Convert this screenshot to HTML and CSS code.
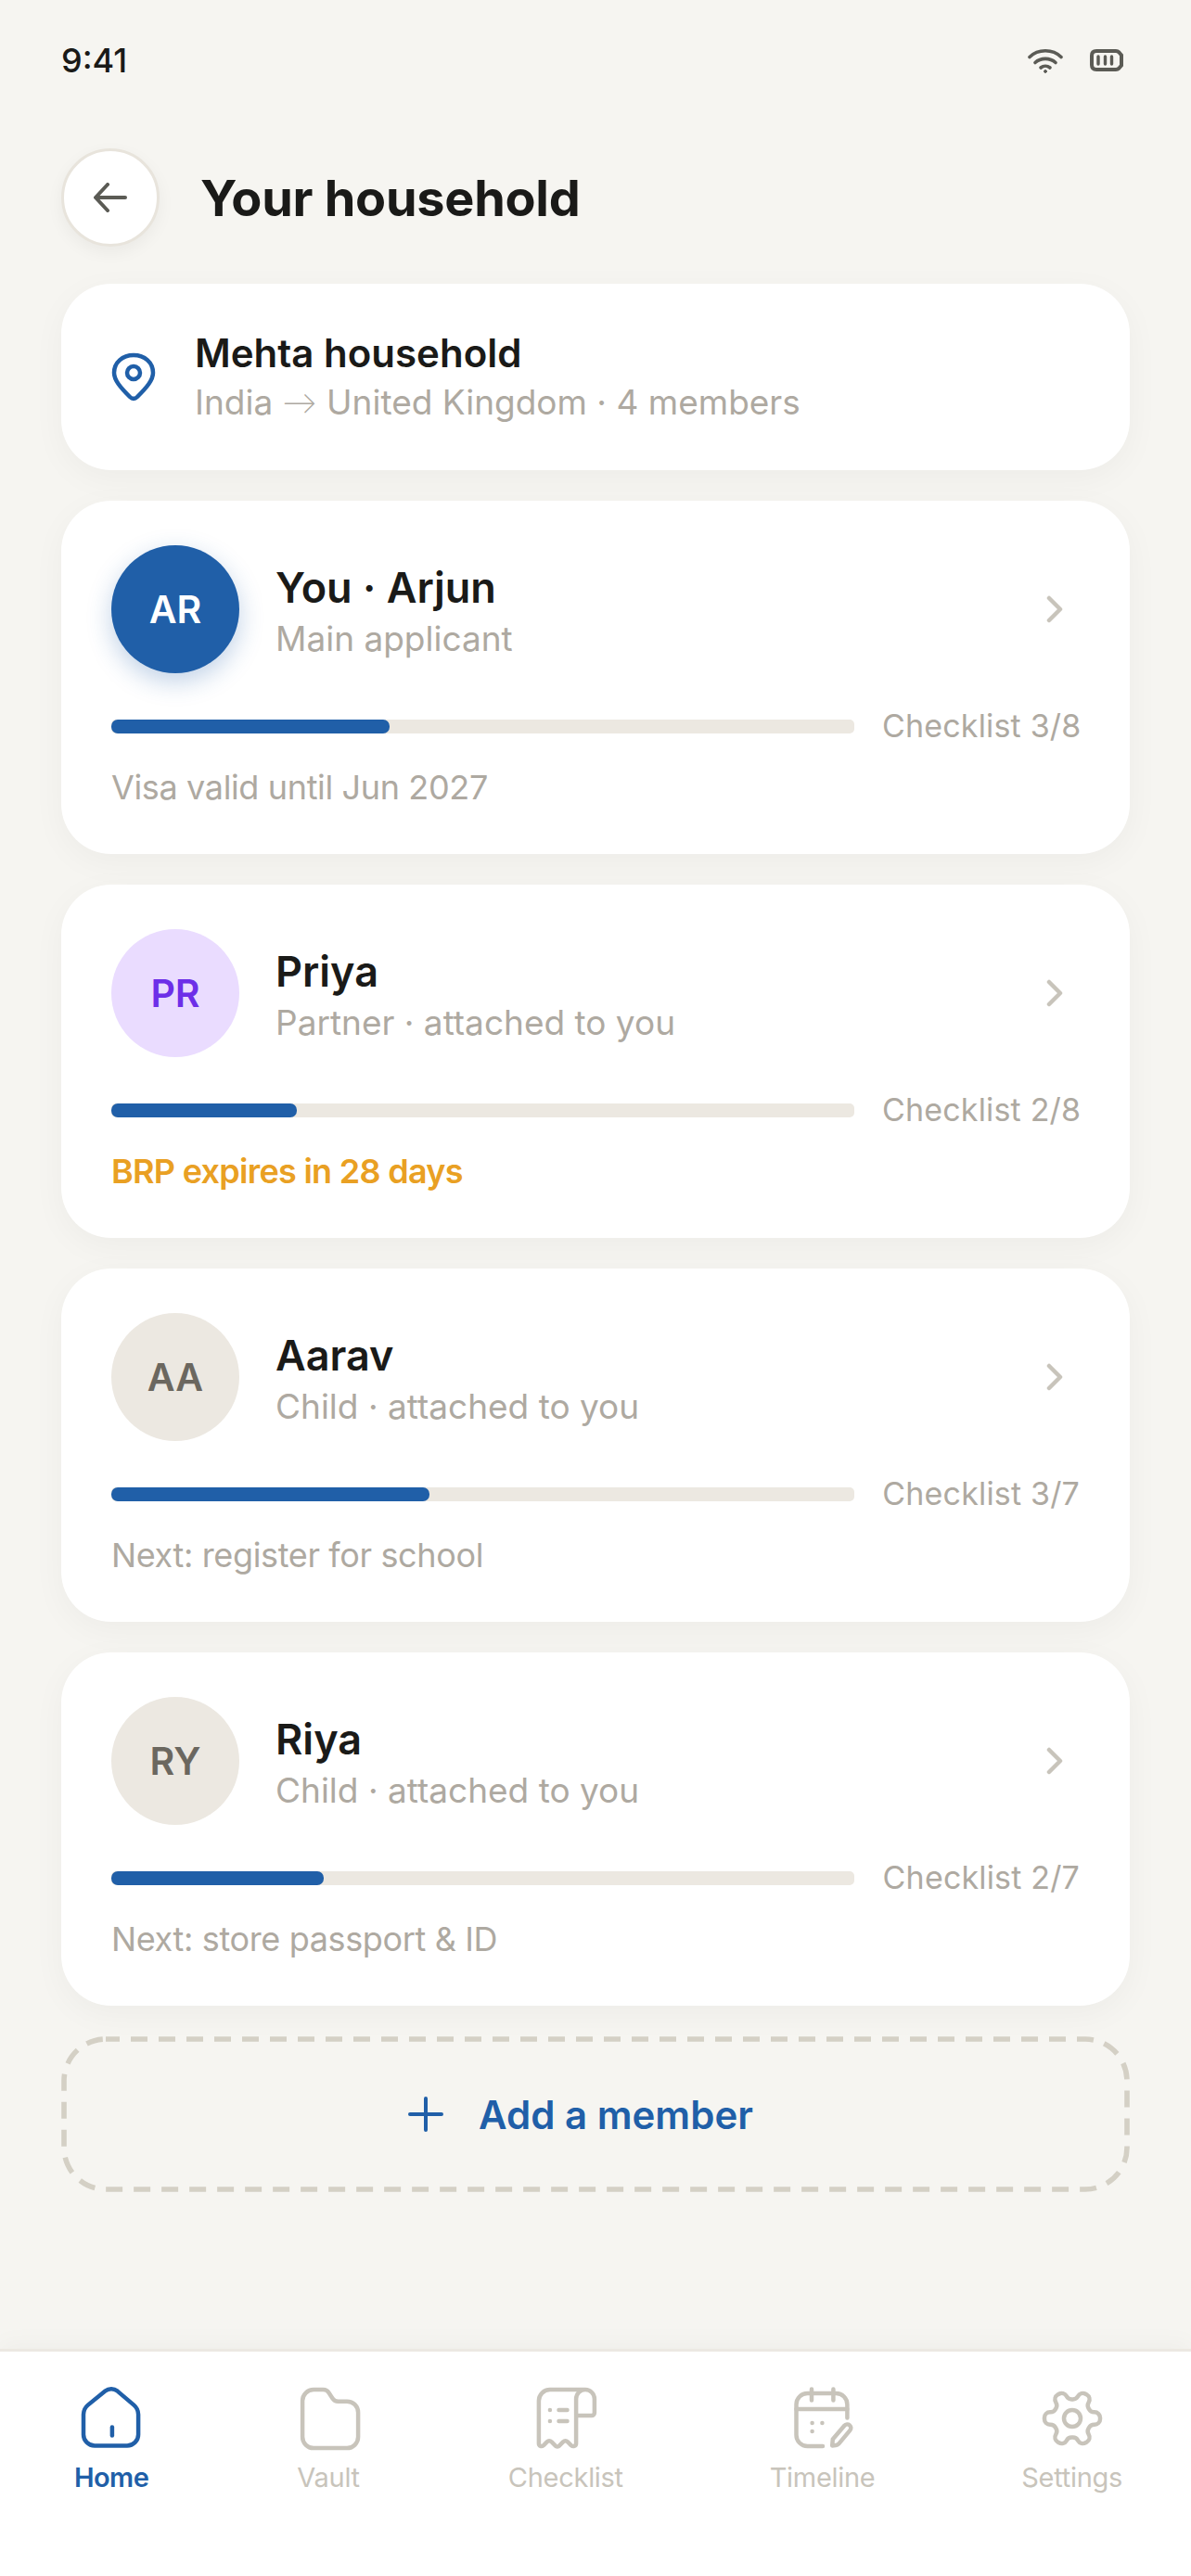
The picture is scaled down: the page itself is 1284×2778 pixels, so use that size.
FILE: index.html
```html
<!DOCTYPE html>
<html lang="en">
<head>
<meta charset="utf-8">
<title>Your household</title>
<link rel="stylesheet" href="styles.css">
</head>
<body>
<div class="app">
  <div class="status">
    <span class="time">9:41</span>
    <div class="status-icons">
      <svg class="wifi" viewBox="0 0 38 28" fill="none" stroke="#5b5b55" stroke-width="3.6" stroke-linecap="round"><path d="M2 10.5C11 1.5 27 1.5 36 10.5"/><path d="M8 16.5C14 11 24 11 30 16.5"/><path d="M14 22C17 19.6 21 19.6 24 22"/><circle cx="19" cy="26" r="1.4" fill="#5b5b55" stroke-width="1"/></svg>
      <svg class="battery" viewBox="0 0 37 24" fill="none" stroke="#5b5b55"><path stroke-width="4" d="M7 2H28Q30 2 31.5 3.5L34 6.5V17.500L31.500 20.500Q30 22 28 22H7Q2 22 2 17V7Q2 2 7 2Z"/><path stroke-width="3.400" stroke-linecap="round" d="M9 8V16M16.500 8V16M23.500 8V16"/></svg>
    </div>
  </div>

  <header class="header">
    <button class="back" type="button" aria-label="Back">
      <svg class="back-icon" viewBox="0 0 36 32" fill="none" stroke="#5b5b55" stroke-width="4" stroke-linecap="round" stroke-linejoin="round"><path d="M34 16H3"/><path d="M15 2L2 16L15 30"/></svg>
    </button>
    <h1 class="title">Your household</h1>
  </header>

  <main class="list">
    <section class="card summary">
      <svg class="pin" viewBox="0 0 48 54" fill="none" stroke="#205fa8" stroke-width="4.500" stroke-linejoin="round"><path d="M24 3C12 3 3 11 3 22C3 30 10 38 20 48Q24 52 28 48C38 38 45 30 45 22C45 11 36 3 24 3Z"/><circle cx="24" cy="22" r="7"/></svg>
      <div class="info">
        <div class="summary-name">Mehta household</div>
        <div class="sub">India <span class="arrow">→</span> United Kingdom · 4 members</div>
      </div>
    </section>

    <section class="card member">
      <div class="member-top">
        <div class="avatar avatar-blue">AR</div>
        <div class="info member-info">
          <div class="name">You · Arjun</div>
          <div class="sub">Main applicant</div>
        </div>
        <svg class="chevron" viewBox="0 0 18 30" fill="none" stroke="#c8c4bb" stroke-width="4.500" stroke-linecap="round" stroke-linejoin="round"><path d="M3 3L15 15L3 27"/></svg>
      </div>
      <div class="progress">
        <div class="track"><div class="fill" style="width:37.5%"></div></div>
        <span class="count">Checklist 3/8</span>
      </div>
      <div class="note">Visa valid until Jun 2027</div>
    </section>

    <section class="card member">
      <div class="member-top">
        <div class="avatar avatar-purple">PR</div>
        <div class="info member-info">
          <div class="name">Priya</div>
          <div class="sub">Partner · attached to you</div>
        </div>
        <svg class="chevron" viewBox="0 0 18 30" fill="none" stroke="#c8c4bb" stroke-width="4.500" stroke-linecap="round" stroke-linejoin="round"><path d="M3 3L15 15L3 27"/></svg>
      </div>
      <div class="progress">
        <div class="track"><div class="fill" style="width:25%"></div></div>
        <span class="count">Checklist 2/8</span>
      </div>
      <div class="note note-warn">BRP expires in 28 days</div>
    </section>

    <section class="card member">
      <div class="member-top">
        <div class="avatar avatar-tan">AA</div>
        <div class="info member-info">
          <div class="name">Aarav</div>
          <div class="sub">Child · attached to you</div>
        </div>
        <svg class="chevron" viewBox="0 0 18 30" fill="none" stroke="#c8c4bb" stroke-width="4.500" stroke-linecap="round" stroke-linejoin="round"><path d="M3 3L15 15L3 27"/></svg>
      </div>
      <div class="progress">
        <div class="track"><div class="fill" style="width:42.86%"></div></div>
        <span class="count">Checklist 3/7</span>
      </div>
      <div class="note">Next: register for school</div>
    </section>

    <section class="card member">
      <div class="member-top">
        <div class="avatar avatar-tan">RY</div>
        <div class="info member-info">
          <div class="name">Riya</div>
          <div class="sub">Child · attached to you</div>
        </div>
        <svg class="chevron" viewBox="0 0 18 30" fill="none" stroke="#c8c4bb" stroke-width="4.500" stroke-linecap="round" stroke-linejoin="round"><path d="M3 3L15 15L3 27"/></svg>
      </div>
      <div class="progress">
        <div class="track"><div class="fill" style="width:28.57%"></div></div>
        <span class="count">Checklist 2/7</span>
      </div>
      <div class="note">Next: store passport &amp; ID</div>
    </section>

    <button class="add" type="button">
      <svg class="add-border" viewBox="0 0 1152 168" fill="none"><rect x="3" y="3" width="1146" height="162" rx="45" stroke="#d4d0c5" stroke-width="5.600" stroke-dasharray="18 12" stroke-dashoffset="3"/></svg>
      <svg class="plus" viewBox="0 0 38 38" fill="none" stroke="#205fa8" stroke-width="4" stroke-linecap="round"><path d="M19 2V36M2 19H36"/></svg>
      <span>Add a member</span>
    </button>
  </main>

  <nav class="nav">
    <a class="tab tab-active">
      <svg class="tab-icon" viewBox="0 0 24 24" fill="none" stroke="currentColor" stroke-width="1.500" stroke-linecap="round" stroke-linejoin="round"><path d="M9.800 2.200a3.500 3.500 0 0 1 4.400 0l5.900 5a4.500 4.500 0 0 1 1.600 3.400v7.200a4 4 0 0 1-4 4H6a4 4 0 0 1-4-4v-7.200a4.500 4.500 0 0 1 1.600-3.400z"/><path d="M12.300 15.200v3"/></svg>
      <span>Home</span>
    </a>
    <a class="tab">
      <svg class="tab-icon" viewBox="0 0 24 24" fill="none" stroke="currentColor" stroke-width="1.500" stroke-linecap="round" stroke-linejoin="round"><path d="M2.700 5.700a4 4 0 0 1 4-4h3.500a2.500 2.500 0 0 1 2 1.100l1.300 2a2.500 2.500 0 0 0 2 1.100h3.200a4 4 0 0 1 4 4v8.800a4 4 0 0 1-4 4h-12a4 4 0 0 1-4-4z"/></svg>
      <span>Vault</span>
    </a>
    <a class="tab">
      <svg class="tab-icon" viewBox="0 0 24 24" fill="none" stroke="currentColor" stroke-width="1.500" stroke-linecap="round" stroke-linejoin="round"><path d="M19 1.700H6.300a4 4 0 0 0-4 4V21c0 1 1 1.300 1.700.7l1.300-1.300a1 1 0 0 1 1.500 0l1.400 1.400a1 1 0 0 0 1.500 0l1.400-1.400a1 1 0 0 1 1.500 0l1.300 1.300c.7.600 1.800.3 1.800-.7V5a3.300 3.300 0 0 1 6.600 0v5a1 1 0 0 1-1 1h-5.600"/><path d="M6.300 9h.01M6.300 13h.01M9.500 9h3M9.500 13h3"/></svg>
      <span>Checklist</span>
    </a>
    <a class="tab">
      <svg class="tab-icon" viewBox="0 0 24 24" fill="none" stroke="currentColor" stroke-width="1.500" stroke-linecap="round" stroke-linejoin="round"><path d="M8 1.500v4M15.800 1.500v4"/><path d="M20.800 11.800V7a4 4 0 0 0-4-4H6.500a4 4 0 0 0-4 4v11a4 4 0 0 0 4 4H12"/><path d="M2.500 8.700h18.300"/><path d="M8.200 13.700h.01M11.800 13.700h.01M8.200 16.700h.01"/><path d="M15.400 21.800l.2-2.300 4.200-4.900a1.300 1.300 0 0 1 2 1.700l-4.100 4.900a1.500 1.500 0 0 1-1 .5z"/></svg>
      <span>Timeline</span>
    </a>
    <a class="tab">
      <svg class="tab-icon" viewBox="0 0 24 24" fill="none" stroke="currentColor" stroke-width="1.500" stroke-linecap="round" stroke-linejoin="round"><path transform="rotate(90 12 12)" d="M12.220 2h-.44a2 2 0 0 0-2 2v.18a2 2 0 0 1-1 1.730l-.43.25a2 2 0 0 1-2 0l-.15-.08a2 2 0 0 0-2.730.73l-.22.38a2 2 0 0 0 .73 2.730l.15.1a2 2 0 0 1 1 1.720v.51a2 2 0 0 1-1 1.740l-.15.09a2 2 0 0 0-.73 2.730l.22.38a2 2 0 0 0 2.730.73l.15-.08a2 2 0 0 1 2 0l.43.25a2 2 0 0 1 1 1.730V20a2 2 0 0 0 2 2h.44a2 2 0 0 0 2-2v-.18a2 2 0 0 1 1-1.730l.43-.25a2 2 0 0 1 2 0l.15.08a2 2 0 0 0 2.730-.73l.22-.39a2 2 0 0 0-.73-2.730l-.15-.08a2 2 0 0 1-1-1.740v-.5a2 2 0 0 1 1-1.740l.15-.09a2 2 0 0 0 .73-2.730l-.22-.38a2 2 0 0 0-2.730-.73l-.15.08a2 2 0 0 1-2 0l-.43-.25a2 2 0 0 1-1-1.730V4a2 2 0 0 0-2-2z"/><circle cx="12" cy="12" r="3"/></svg>
      <span>Settings</span>
    </a>
  </nav>
</div>
</body>
</html>
```

FILE: styles.css
```css
* { box-sizing: border-box; }
html, body { margin: 0; padding: 0; }
body {
  background: #f6f5f1;
  color: #1a1a18;
  font-family: "Inter", "Lato", sans-serif;
}
.app {
  width: 1284px;
  height: 2778px;
  display: flex;
  flex-direction: column;
  overflow: hidden;
}
.status {
  height: 130px;
  flex: none;
  padding: 0 72px 0 66px;
  display: flex;
  align-items: center;
  justify-content: space-between;
}
.time { font-size: 36px; font-weight: 500; color: #1a1a18; }
.status-icons { display: flex; align-items: center; gap: 29px; }
.wifi { width: 38px; height: 28px; }
.battery { width: 37px; height: 24px; }
.header {
  flex: none;
  height: 106px;
  margin-top: 30px;
  padding: 0 66px;
  display: flex;
  align-items: center;
  gap: 44px;
}
.back {
  width: 106px;
  height: 106px;
  flex: none;
  border-radius: 50%;
  border: 3px solid #e8e4dc;
  background: #fff;
  box-shadow: 0 6px 18px rgba(0,0,0,.05);
  display: flex;
  align-items: center;
  justify-content: center;
  padding: 0;
}
.back-icon { width: 36px; height: 32px; }
.title { margin: 0; font-size: 54px; font-weight: 700; letter-spacing: -0.005em; color: #1a1a18; }
.list {
  flex: 1;
  margin-top: 40px;
  padding: 0 66px;
  display: flex;
  flex-direction: column;
  gap: 33px;
}
.card {
  background: #fff;
  border-radius: 54px;
  box-shadow: 0 9px 36px rgba(0,0,0,.04);
}
.summary {
  height: 201px;
  padding: 0 54px;
  display: flex;
  align-items: center;
  gap: 42px;
}
.pin { width: 48px; height: 54px; flex: none; }
.summary-name { font-size: 42px; font-weight: 600; line-height: 54px; }
.sub { font-size: 37px; line-height: 50px; color: #aea9a1; }
.arrow { font-family: "Lato", sans-serif; font-weight: 300; }
.member { height: 381px; padding: 48px 54px 0; }
.member-top { display: flex; align-items: center; gap: 39px; height: 138px; }
.avatar {
  width: 138px;
  height: 138px;
  flex: none;
  border-radius: 50%;
  display: flex;
  align-items: center;
  justify-content: center;
  font-size: 41px;
  font-weight: 600;
}
.avatar-blue { background: #205fa8; color: #fff; box-shadow: 0 9px 27px rgba(32,95,168,.28); }
.avatar-purple { background: #eadcff; color: #6d2fe8; }
.avatar-tan { background: #ece8e1; color: #6b675f; }
.info { flex: 1; min-width: 0; }
.member-info { padding-top: 4px; }
.name { font-size: 45px; font-weight: 600; line-height: 60px; }
.chevron { width: 18px; height: 30px; flex: none; margin-right: 18px; }
.progress {
  margin-top: 35px;
  display: flex;
  align-items: center;
  gap: 30px;
}
.track { flex: 1; height: 15px; border-radius: 5px; background: #ece8e1; overflow: hidden; }
.fill { height: 100%; border-radius: 7px; background: #205fa8; }
.count { flex: none; width: 213px; white-space: nowrap; text-align: right; font-size: 34px; letter-spacing: 0.005em; line-height: 44px; color: #aea9a1; }
.note { margin-top: 22px; font-size: 36px; line-height: 44px; color: #aea9a1; letter-spacing: -0.01em; }
.note-warn { color: #e9a023; font-weight: 600; letter-spacing: -0.02em; }
.add {
  position: relative;
  flex: none;
  height: 168px;
  padding: 0 32px 0 0;
  border: 0;
  background: none;
  display: flex;
  align-items: center;
  justify-content: center;
  gap: 38px;
  color: #205fa8;
  font-family: inherit;
  font-size: 42px;
  font-weight: 600;
}
.add-border { position: absolute; left: 0; top: 0; width: 100%; height: 100%; }
.plus { width: 38px; height: 38px; flex: none; }
.nav {
  flex: none;
  height: 245px;
  background: #fff;
  border-top: 3px solid #ece8e2;
  box-shadow: 0 -6px 24px rgba(0,0,0,.03);
  padding: 36px 74px 0 80px;
  display: flex;
  justify-content: space-between;
  align-items: flex-start;
}
.tab {
  display: flex;
  flex-direction: column;
  align-items: center;
  gap: 8px;
  color: #c8c4bb;
  font-size: 29px;
  line-height: 40px;
  letter-spacing: -0.01em;
}
.tab-active { color: #205fa8; font-weight: 600; letter-spacing: -0.02em; }
.tab-icon { width: 72px; height: 72px; display: block; }
```
